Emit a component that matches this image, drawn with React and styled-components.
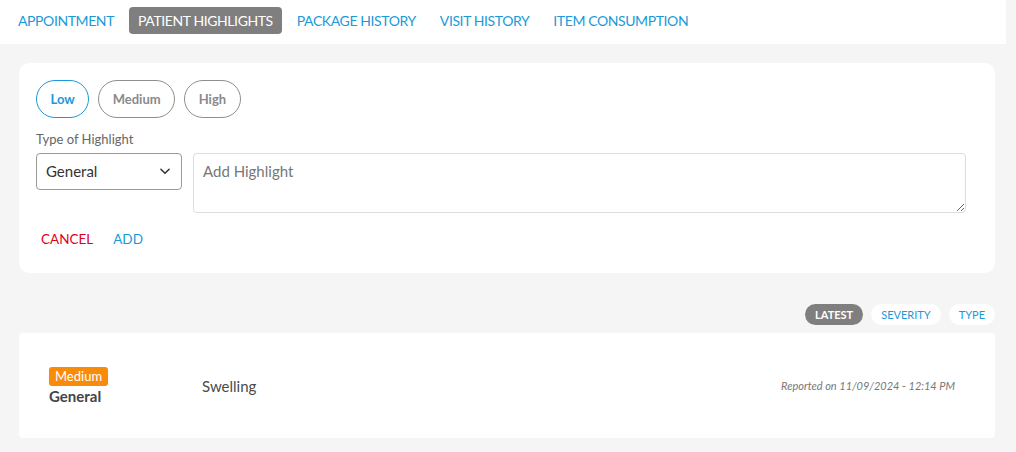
import React, { useState } from "react";
import styled, { createGlobalStyle } from "styled-components";

const tabs = ["Appointment", "Patient Highlights", "Package History", "Visit History", "Item Consumption"];
const severities = ["Low", "Medium", "High"];
const sorts = ["Latest", "Severity", "Type"];

export default function App() {
  const [tab] = useState("Patient Highlights");
  const [severity, setSeverity] = useState("Low");
  const [sort, setSort] = useState("Latest");

  return (
    <>
      <Global />
      <Page>
        <TabBar>
          {tabs.map((t) => (
            <Tab key={t} $active={t === tab}>
              {t}
            </Tab>
          ))}
        </TabBar>

        <Content>
          <FormCard>
            <Pills>
              {severities.map((s) => (
                <Pill key={s} $active={s === severity} onClick={() => setSeverity(s)}>
                  {s}
                </Pill>
              ))}
            </Pills>
            <Label>Type of Highlight</Label>
            <FieldRow>
              <SelectBox>
                <span>General</span>
                <svg width="14" height="14" viewBox="0 0 24 24" fill="none" stroke="#333" strokeWidth="2.6" strokeLinecap="round" strokeLinejoin="round">
                  <path d="M5 9l7 7 7-7" />
                </svg>
              </SelectBox>
              <TextArea placeholder="Add Highlight" />
            </FieldRow>
            <Actions>
              <TextButton $color="#e3001b">Cancel</TextButton>
              <TextButton $color="#1a9ad7">Add</TextButton>
            </Actions>
          </FormCard>

          <SortRow>
            {sorts.map((s) => (
              <Chip key={s} $active={s === sort} onClick={() => setSort(s)}>
                {s}
              </Chip>
            ))}
          </SortRow>

          <Item>
            <ItemType>
              <Badge>Medium</Badge>
              <TypeName>General</TypeName>
            </ItemType>
            <ItemText>Swelling</ItemText>
            <Reported>Reported on 11/09/2024 - 12:14 PM</Reported>
          </Item>
        </Content>
      </Page>
    </>
  );
}

const Global = createGlobalStyle`
  body {
    margin: 0;
    background: #f5f5f5;
    font-family: Lato, "Open Sans", sans-serif;
  }
  * { box-sizing: border-box; }
`;

const Page = styled.div`
  width: 1016px;
  min-height: 452px;
  background: #f5f5f5;
`;

const TabBar = styled.div`
  width: 1006px;
  height: 44px;
  background: #fff;
  display: flex;
  align-items: flex-start;
  gap: 6px;
  padding: 7px 0 0 9px;
`;

const Tab = styled.div`
  height: 27px;
  display: flex;
  align-items: center;
  padding: 0 9px;
  border-radius: 4px;
  font-size: 14px;
  text-transform: uppercase;
  letter-spacing: -0.4px;
  color: ${(p) => (p.$active ? "#fff" : "#1a9ad7")};
  background: ${(p) => (p.$active ? "#7f7f7f" : "transparent")};
`;

const Content = styled.div`
  padding: 19px 21px 0 19px;
`;

const FormCard = styled.div`
  background: #fff;
  border-radius: 10px;
  padding: 17px 29px 25px 17px;
`;

const Pills = styled.div`
  display: flex;
  gap: 9px;
`;

const Pill = styled.div`
  height: 38px;
  padding: 0 13.5px;
  border-radius: 19px;
  display: flex;
  align-items: center;
  font-size: 13px;
  font-weight: 700;
  border: 1px solid ${(p) => (p.$active ? "#1a9ad7" : "#8f8f8f")};
  color: ${(p) => (p.$active ? "#1a9ad7" : "#8a8a8a")};
  cursor: pointer;
`;

const Label = styled.div`
  margin-top: 13px;
  font-size: 13px;
  color: #666;
  line-height: 16px;
`;

const FieldRow = styled.div`
  display: flex;
  gap: 11px;
  margin-top: 6px;
  align-items: flex-start;
`;

const SelectBox = styled.div`
  width: 146px;
  height: 37px;
  border: 1px solid #9a9a9a;
  border-radius: 4px;
  display: flex;
  align-items: center;
  justify-content: space-between;
  padding: 0 9px 1px 9px;
  font-size: 15px;
  color: #333;
`;

const TextArea = styled.textarea`
  flex: 1;
  height: 60px;
  border: 1px solid #ddd;
  border-radius: 4px;
  padding: 8px 9px;
  font-family: Lato, "Open Sans", sans-serif;
  font-size: 15px;
  color: #333;
  outline: none;
  &::placeholder {
    color: #777;
  }
`;

const Actions = styled.div`
  display: flex;
  gap: 10px;
  margin-top: 17px;
`;

const TextButton = styled.div`
  padding: 0 5px;
  font-size: 13.5px;
  line-height: 18px;
  text-transform: uppercase;
  color: ${(p) => p.$color};
  cursor: pointer;
`;

const SortRow = styled.div`
  display: flex;
  justify-content: flex-end;
  gap: 8px;
  margin-top: 31px;
`;

const Chip = styled.div`
  height: 21px;
  padding: 0 10px;
  border-radius: 11px;
  display: flex;
  align-items: center;
  font-size: 11px;
  font-weight: ${(p) => (p.$active ? 700 : 400)};
  text-transform: uppercase;
  color: ${(p) => (p.$active ? "#fff" : "#1a9ad7")};
  background: ${(p) => (p.$active ? "#7f7f7f" : "#fff")};
  cursor: pointer;
`;

const Item = styled.div`
  margin-top: 8px;
  height: 105px;
  background: #fff;
  border-radius: 4px;
  display: flex;
  align-items: center;
  padding: 0 40px 0 30px;
`;

const ItemType = styled.div`
  width: 153px;
  display: flex;
  flex-direction: column;
  align-items: flex-start;
  margin-top: 2px;
`;

const Badge = styled.span`
  background: #f98b0a;
  color: #fff;
  font-size: 13px;
  line-height: 19px;
  padding: 0 6px;
  border-radius: 3px;
`;

const TypeName = styled.div`
  font-size: 15px;
  font-weight: 700;
  color: #444;
  line-height: 20px;
`;

const ItemText = styled.div`
  flex: 1;
  font-size: 15px;
  color: #4a4a4a;
`;

const Reported = styled.div`
  font-size: 11px;
  font-style: italic;
  color: #777;
`;
